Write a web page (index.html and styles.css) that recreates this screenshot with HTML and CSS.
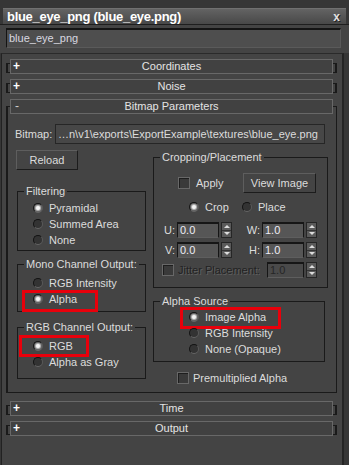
FILE: index.html
```html
<!DOCTYPE html>
<html lang="en">
<head>
    <meta charset="UTF-8">
    <meta name="viewport" content="width=device-width, initial-scale=1.0">
    <title>blue_eye_png (blue_eye.png)</title>
    <link rel="stylesheet" href="styles.css">
</head>
<body>
    <div class="window">
        <div class="titlebar">
            <span class="title">blue_eye_png (blue_eye.png)</span>
            <span class="close">x</span>
        </div>
        <div class="namebar">
            <div class="namefield">blue_eye_png</div>
        </div>

        <div class="panel">
            <div class="rollout">
                <div class="rollout-head"><span class="sign">+</span><span>Coordinates</span><span></span></div>
            </div>
            <div class="rollout">
                <div class="rollout-head"><span class="sign">+</span><span>Noise</span><span></span></div>
            </div>

            <!-- Bitmap Parameters (open) -->
            <div class="rollout open">
                <div class="rollout-head"><span class="sign minus">-</span><span>Bitmap Parameters</span><span></span></div>
                <div class="rollout-body">
                    <div class="bitmap-row">
                        <span class="bitmap-label">Bitmap:</span>
                        <div class="pathfield">…n\v1\exports\ExportExample\textures\blue_eye.png</div>
                    </div>

                    <div class="columns">
                        <div class="col">
                            <button class="btn reload">Reload</button>

                            <fieldset class="group filtering">
                                <legend>Filtering</legend>
                                <div class="radio-row"><span class="radio on"></span>Pyramidal</div>
                                <div class="radio-row"><span class="radio"></span>Summed Area</div>
                                <div class="radio-row"><span class="radio"></span>None</div>
                            </fieldset>

                            <fieldset class="group mono">
                                <legend>Mono Channel Output:</legend>
                                <div class="radio-row"><span class="radio"></span>RGB Intensity</div>
                                <div class="radio-row mark mark-alpha"><span class="radio on"></span>Alpha</div>
                            </fieldset>

                            <fieldset class="group rgb">
                                <legend>RGB Channel Output:</legend>
                                <div class="radio-row mark mark-rgb"><span class="radio on"></span>RGB</div>
                                <div class="radio-row"><span class="radio"></span>Alpha as Gray</div>
                            </fieldset>
                        </div>

                        <div class="col">
                            <fieldset class="group crop">
                                <legend>Cropping/Placement</legend>
                                <div class="apply-row">
                                    <span class="check"></span>
                                    <span class="check-text">Apply</span>
                                    <button class="btn view-image">View Image</button>
                                </div>
                                <div class="crop-row">
                                    <span class="opt"><span class="radio on"></span>Crop</span>
                                    <span class="opt"><span class="radio"></span>Place</span>
                                </div>
                                <div class="spin-row">
                                    <span class="spin-group">
                                        <span class="spin-label">U:</span>
                                        <span class="field">0.0</span>
                                        <span class="spin"><i class="up"></i><i class="down"></i></span>
                                    </span>
                                    <span class="spin-group">
                                        <span class="spin-label">W:</span>
                                        <span class="field">1.0</span>
                                        <span class="spin"><i class="up"></i><i class="down"></i></span>
                                    </span>
                                </div>
                                <div class="spin-row second">
                                    <span class="spin-group">
                                        <span class="spin-label">V:</span>
                                        <span class="field">0.0</span>
                                        <span class="spin"><i class="up"></i><i class="down"></i></span>
                                    </span>
                                    <span class="spin-group">
                                        <span class="spin-label">H:</span>
                                        <span class="field">1.0</span>
                                        <span class="spin"><i class="up"></i><i class="down"></i></span>
                                    </span>
                                </div>
                                <div class="jitter-row">
                                    <span class="check"></span>
                                    <span class="disabled">Jitter Placement:</span>
                                    <span class="field dim">1.0</span>
                                    <span class="spin"><i class="up"></i><i class="down"></i></span>
                                </div>
                            </fieldset>

                            <fieldset class="group alpha">
                                <legend>Alpha Source</legend>
                                <div class="radio-row wide mark mark-image"><span class="radio on"></span>Image Alpha</div>
                                <div class="radio-row wide"><span class="radio"></span>RGB Intensity</div>
                                <div class="radio-row wide"><span class="radio"></span>None (Opaque)</div>
                            </fieldset>

                            <div class="premult">
                                <span class="check"></span>
                                <span class="check-text">Premultiplied Alpha</span>
                            </div>
                        </div>
                    </div>
                </div>
            </div>

            <div class="rollout">
                <div class="rollout-head"><span class="sign">+</span><span>Time</span><span></span></div>
            </div>
            <div class="rollout">
                <div class="rollout-head"><span class="sign">+</span><span>Output</span><span></span></div>
            </div>
        </div>
    </div>
</body>
</html>
```

FILE: styles.css
```css
*,
*::before,
*::after {
    box-sizing: border-box;
}
body {
    margin: 0;
    width: 349px;
    height: 465px;
    overflow: hidden;
    background-color: #444444;
    color: #dcdcdc;
    font-family: "Liberation Sans", Arial, sans-serif;
    font-size: 11px;
}
.window {
    height: 465px;
    padding-top: 8px;
    background-color: #363636;
    display: flex;
    flex-direction: column;
}

/* title + name */
.titlebar {
    height: 16px;
    margin: 0 3px;
    padding: 0 6px 0 4px;
    display: flex;
    align-items: center;
    justify-content: space-between;
    background: linear-gradient(#636363, #484848);
    border-top: 1px solid #707070;
}
.title {
    font-size: 13px;
    font-weight: bold;
    letter-spacing: -0.3px;
    color: #ffffff;
}
.close {
    font-size: 12px;
    font-weight: bold;
    color: #e0e0e0;
    text-shadow: 1px 1px 0 #222;
}
.namebar {
    background-color: #444444;
    border-top: 1px solid #1e1e1e;
    padding: 3px 8px 5px 6px;
}
.namefield {
    height: 20px;
    padding-left: 2px;
    line-height: 17px;
    background-color: #4e4e4e;
    border: 1px solid #5a5a5a;
    border-top: 2px solid #141414;
    border-left-color: #141414;
    color: #d8d8e0;
}

/* rollout panel */
.panel {
    flex: 1;
    margin: 0 5px 0 1px;
    padding: 5px 5px 0 4px;
    background-color: #444444;
    border-top: 1px solid #2a2a2a;
    border-left: 1px solid #222;
    border-right: 2px solid #242424;
}
.rollout {
    position: relative;
    margin-bottom: 5px;
}
.rollout::before {
    content: "";
    position: absolute;
    left: 0;
    right: 0;
    top: 4px;
    height: 10px;
    border: 1px solid #1a1a1a;
    border-left-width: 2px;
    border-right-width: 2px;
}
.rollout.open {
    margin-bottom: 8px;
}
.rollout.open::before {
    top: 7px;
    height: auto;
    bottom: 0;
    border-right-width: 1px;
}
.rollout-head {
    position: relative;
    z-index: 1;
    height: 15px;
    margin: 0 4px;
    display: grid;
    grid-template-columns: 20px 1fr 20px;
    align-items: center;
    text-align: center;
    line-height: 13px;
    background-color: #414141;
    border: 1px solid #686868;
    color: #e4e4e4;
}
.sign {
    text-align: left;
    padding-left: 2px;
    font-size: 12px;
    font-weight: bold;
    color: #ffffff;
}
.sign.minus {
    padding-left: 4px;
    font-weight: normal;
    color: #cfcfcf;
}
.rollout-body {
    padding: 10px 9px 9px 10px;
}

/* bitmap path */
.bitmap-row {
    display: flex;
    align-items: center;
    height: 20px;
}
.bitmap-label {
    width: 40px;
    margin-left: -1px;
}
.pathfield {
    flex: 1;
    height: 20px;
    margin-right: 3px;
    padding-left: 2px;
    line-height: 18px;
    white-space: nowrap;
    overflow: hidden;
    background-color: #474747;
    border: 1px solid #262626;
}

.columns {
    display: grid;
    grid-template-columns: 130px 175px;
    column-gap: 7px;
    align-items: start;
    margin-top: 6px;
}

/* buttons */
.btn {
    display: block;
    height: 20px;
    padding: 0;
    font: inherit;
    color: #dcdcdc;
    background-color: #444444;
    border: 1px solid;
    border-color: #5e5e5e #1c1c1c #1c1c1c #5e5e5e;
}
.reload {
    width: 62px;
}
.view-image {
    width: 73px;
    margin-left: auto;
}

/* group boxes */
.group {
    margin: 0;
    padding: 0;
    min-width: 0;
    border: 1px solid #1a1a1a;
}
.group legend {
    margin-left: 6px;
    padding: 0 2px;
    line-height: 12px;
}
.filtering {
    margin: 15px 0 0 1px;
    padding: 3px 0 2px;
}
.mono {
    margin: 7px 0 0 1px;
    padding: 5px 0 4px;
}
.rgb {
    margin: 9px 0 0 1px;
    padding: 5px 0 8px;
}
.crop {
    margin-top: 1px;
    padding: 10px 0 9px;
}
.alpha {
    margin: 7px 3px 0 0;
    padding: 2px 0 4px;
}

/* radios + checks */
.radio-row {
    position: relative;
    display: flex;
    align-items: center;
    gap: 6px;
    height: 16px;
    padding-left: 15px;
}
.radio-row.wide {
    padding-left: 35px;
}
.radio {
    position: relative;
    flex: none;
    width: 10px;
    height: 10px;
    border-radius: 50%;
    background-color: #333333;
    border: 1px solid;
    border-color: #141414 #5a5a5a #666666 #141414;
}
.radio.on {
    background-color: #5e5e5e;
}
.radio.on::after {
    content: "";
    position: absolute;
    left: 2px;
    top: 2px;
    width: 4px;
    height: 4px;
    border-radius: 50%;
    background-color: #f4f4f4;
    box-shadow: 0 0 1px 1px #bdbdbd;
}
.check {
    flex: none;
    width: 12px;
    height: 12px;
    background-color: #3a3a3a;
    border: 1px solid #686868;
    box-shadow: inset 1px 1px 0 #1e1e1e;
}
.check-text {
    margin-left: 6px;
}

/* cropping rows */
.apply-row {
    display: flex;
    align-items: center;
    height: 20px;
    padding: 0 11px 0 24px;
}
.crop-row {
    display: flex;
    align-items: center;
    height: 14px;
    margin-top: 7px;
    padding-left: 35px;
}
.opt {
    display: flex;
    align-items: center;
    gap: 6px;
}
.opt:first-child {
    width: 53px;
}
.spin-row {
    display: flex;
    align-items: center;
    height: 16px;
    margin-top: 8px;
    padding-left: 4px;
}
.spin-row.second {
    margin-top: 4px;
}
.spin-group {
    display: flex;
    align-items: center;
}
.spin-group + .spin-group {
    margin-left: 11px;
}
.spin-label {
    width: 17px;
    margin-right: 2px;
    text-align: right;
}
.field {
    width: 42px;
    height: 16px;
    padding-left: 2px;
    line-height: 13px;
    background-color: #565656;
    border: 1px solid #161616;
    border-top-width: 2px;
    border-bottom-color: #5e5e5e;
    color: #ececf4;
}
.field.dim {
    width: 37px;
    margin-left: auto;
    background-color: #4a4a4a;
    color: #262626;
}
.spin {
    display: flex;
    flex-direction: column;
    width: 11px;
    height: 16px;
    margin-left: 2px;
    background-color: #5a5a5a;
    border: 1px solid #262626;
}
.spin i {
    flex: 1;
    display: flex;
    align-items: center;
    justify-content: center;
}
.spin i + i {
    border-top: 1px solid #333;
}
.spin .up::before {
    content: "";
    border-left: 3px solid transparent;
    border-right: 3px solid transparent;
    border-bottom: 3px solid #dddddd;
}
.spin .down::before {
    content: "";
    border-left: 3px solid transparent;
    border-right: 3px solid transparent;
    border-top: 3px solid #dddddd;
}
.jitter-row {
    display: flex;
    align-items: center;
    height: 16px;
    margin-top: 4px;
    padding: 0 10px 0 8px;
}
.disabled {
    margin-left: 4px;
    color: #222222;
    text-shadow: 1px 1px 0 #606060;
}
.premult {
    display: flex;
    align-items: center;
    height: 13px;
    margin-top: 9px;
    padding-left: 24px;
}
.premult .check-text {
    margin-left: 4px;
}

/* red annotation boxes */
.mark::after {
    content: "";
    position: absolute;
    border: 3px solid #e8000b;
}
.mark-alpha::after {
    left: 4px;
    top: -1px;
    width: 76px;
    height: 22px;
}
.mark-rgb::after {
    left: 1px;
    top: -3px;
    width: 70px;
    height: 22px;
}
.mark-image::after {
    left: 26px;
    top: -2px;
    width: 101px;
    height: 22px;
}
```
